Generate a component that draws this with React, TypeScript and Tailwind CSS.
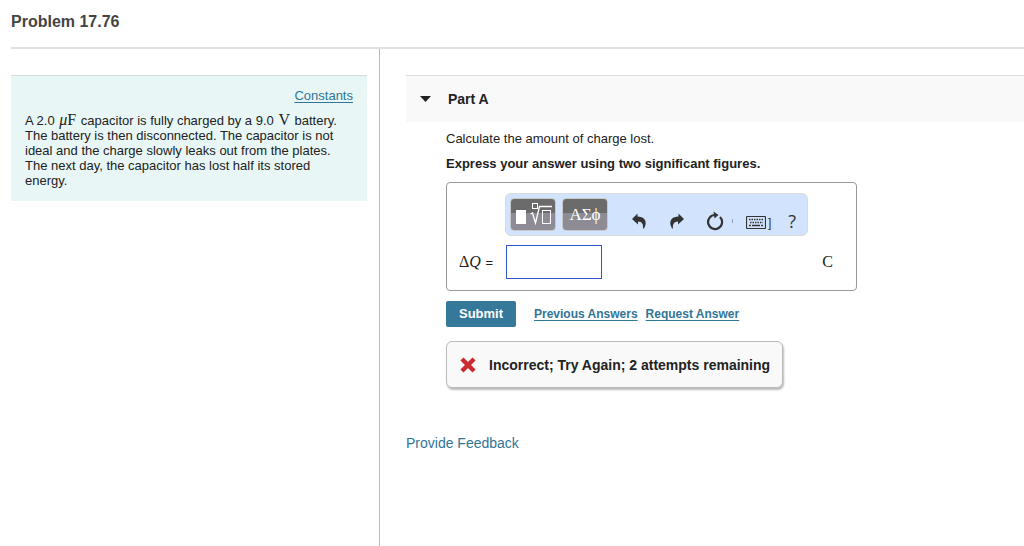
import type { ReactNode } from "react";

const Serif = ({ children }: { children: ReactNode }) => (
  <span className="mx-px font-['Liberation_Serif',serif] text-base leading-none">
    {children}
  </span>
);

const TemplatesIcon = () => (
  <svg
    width="38"
    height="24"
    viewBox="0 0 38 24"
    fill="none"
    stroke="white"
    aria-hidden="true"
  >
    <rect x="2" y="7" width="10" height="14" fill="white" stroke="none" />
    <rect x="18.5" y="0.5" width="5" height="5" />
    <path d="M16.5 11l2-1 3 10L25.5 3.5H38" strokeWidth="1.3" />
    <rect x="28.5" y="7.5" width="8" height="13" />
  </svg>
);

const UndoIcon = () => (
  <svg width="16" height="16" viewBox="0 0 16 16" fill="#333" aria-hidden="true">
    <path d="M1 6L6.500 0.500V3.500C12.500 3.500 15.500 7 14.500 12L13 15.500H12C12.500 11 11 8.700 7 8.500V11.500Z" />
  </svg>
);

const RedoIcon = () => (
  <svg width="16" height="16" viewBox="0 0 16 16" fill="#333" aria-hidden="true">
    <path d="M15 6L9.500 0.500V3.500C3.500 3.500 0.500 7 1.500 12L3 15.500H4C3.500 11 5 8.700 9 8.500V11.500Z" />
  </svg>
);

const ResetIcon = () => (
  <svg width="18" height="20" viewBox="0 0 18 20" aria-hidden="true">
    <path
      d="M14 6A7 7 0 1 1 9 4"
      fill="none"
      stroke="#333"
      strokeWidth="2.2"
    />
    <path d="M7.500 0.500L12.500 4L8.500 7.500Z" fill="#333" />
  </svg>
);

const KeyboardIcon = () => (
  <svg
    width="20"
    height="13"
    viewBox="0 0 20 13"
    fill="none"
    stroke="#333"
    aria-hidden="true"
  >
    <rect x="0.5" y="0.5" width="19" height="12" rx="1" strokeWidth="1.2" />
    <path d="M3 3.500H17" strokeWidth="1.5" strokeDasharray="1.5 1" />
    <path d="M4 6.500H17" strokeWidth="1.5" strokeDasharray="1.5 1" />
    <path d="M3 9.500H5M6 9.500H14M15 9.500H17" strokeWidth="1.5" />
  </svg>
);

const WrongIcon = () => (
  <svg width="16" height="16" viewBox="0 0 16 16" aria-hidden="true">
    <path
      d="M3.500 3.500L12.500 12.500M12.500 3.500L3.500 12.500"
      stroke="#cc2a30"
      strokeWidth="4.4"
      strokeLinecap="square"
      strokeLinejoin="round"
    />
  </svg>
);

const paletteButton =
  "flex h-[33px] w-[46px] items-center justify-center rounded border border-[#c8c8c8] bg-linear-to-b from-[#6b6b6b] from-45% to-[#8d8c94] to-45% text-white";

const Toolbar = () => (
  <div className="flex h-[43px] w-[303px] items-center rounded-md border border-[#dadada] bg-[#d2e4fd] px-1 text-[#333]">
    <button type="button" aria-label="Templates" className={paletteButton}>
      <TemplatesIcon />
    </button>
    <button
      type="button"
      aria-label="Symbols"
      className={`${paletteButton} ml-1.5 font-['Liberation_Serif',serif] text-[17px]`}
    >
      ΑΣϕ
    </button>
    <div className="flex flex-1 items-center pt-3 pl-[23px]">
      <button type="button" aria-label="Undo">
        <UndoIcon />
      </button>
      <button type="button" aria-label="Redo" className="ml-[22px]">
        <RedoIcon />
      </button>
      <button type="button" aria-label="Reset" className="ml-[21px]">
        <ResetIcon />
      </button>
      <span className="ml-2 h-1 w-px bg-[#8fa3bd]" />
      <button
        type="button"
        aria-label="Keyboard shortcuts"
        className="ml-[13px] flex items-center gap-0.5 pt-1 text-xs leading-none"
      >
        <KeyboardIcon />]
      </button>
      <button
        type="button"
        aria-label="Help"
        className="ml-[17px] font-['Open_Sans',sans-serif] text-lg leading-none"
      >
        ?
      </button>
    </div>
  </div>
);

const Answer = () => (
  <form onSubmit={(e) => e.preventDefault()}>
    <div className="w-[411px] rounded border border-[#999] pt-[10px] pb-[11px] pl-[11px]">
      <div className="pl-[47px]">
        <Toolbar />
      </div>
      <div className="mt-[9px] flex items-center">
        <label htmlFor="answer" className="w-12 whitespace-nowrap">
          <Serif>
            Δ<i>Q</i>
          </Serif>{" "}
          =
        </label>
        <input
          id="answer"
          type="text"
          className="h-[34px] w-24 border border-[#2f57c8] bg-white px-2 outline-none"
        />
        <span className="mr-[22px] ml-auto">
          <Serif>C</Serif>
        </span>
      </div>
    </div>
    <div className="mt-2.5 flex items-center text-xs font-bold text-[#317597]">
      <button
        type="submit"
        className="mr-[18px] h-[26px] w-[70px] rounded-xs bg-[#367899] text-[13px] text-white"
      >
        Submit
      </button>
      <a href="#previous" className="mr-2 underline underline-offset-2">
        Previous Answers
      </a>
      <a href="#request" className="underline underline-offset-2">
        Request Answer
      </a>
    </div>
  </form>
);

export default function App() {
  return (
    <div className="flex min-h-screen flex-col bg-white font-['Liberation_Sans',Arial,sans-serif] text-[13px] leading-[15px] text-[#222]">
      <header className="ml-[11px] border-b-2 border-[#e0e0e0] pt-3 pb-[15px]">
        <h1 className="text-base leading-5 font-bold text-[#444]">
          Problem 17.76
        </h1>
      </header>
      <div className="flex flex-1">
        <aside className="w-[380px] shrink-0 border-r border-[#b5bac4] pt-[26px] pr-3 pl-[11px]">
          <div className="border-t border-[#d5dedd] bg-[#e8f7f6] px-3.5 pt-3 pb-[13px]">
            <p className="text-right">
              <a href="#constants" className="text-[#317597] underline underline-offset-2">
                Constants
              </a>
            </p>
            <p className="mt-[9px]">
              A 2.0 <Serif><i>μ</i>F</Serif> capacitor is fully charged by a 9.0{" "}
              <Serif>V</Serif> battery. The battery is then disconnected. The
              capacitor is not ideal and the charge slowly leaks out from the
              plates. The next day, the capacitor has lost half its stored
              energy.
            </p>
          </div>
        </aside>
        <main className="flex-1 pt-[26px] pl-[26px]">
          <section>
            <h2 className="border-t border-[#ddd] bg-[#f9f9f9]">
              <button
                type="button"
                aria-expanded="true"
                className="flex h-[46px] w-full items-center gap-[17px] pl-3.5 text-sm font-bold"
              >
                <svg width="11" height="6" viewBox="0 0 11 6" fill="#222" aria-hidden="true">
                  <path d="M0 0H11L5.500 6Z" />
                </svg>
                Part A
              </button>
            </h2>
            <div className="pt-[9px] pl-10">
              <p>Calculate the amount of charge lost.</p>
              <p className="mt-2.5 mb-[11px] font-bold">
                Express your answer using two significant figures.
              </p>
              <Answer />
              <div
                role="status"
                className="mt-3.5 flex h-[47px] w-[337px] items-center gap-[13px] rounded-md border border-[#bbb] bg-[#f9f9f9] pl-[13px] text-sm font-bold whitespace-nowrap shadow-[1px_2px_2px_#bbb]"
              >
                <WrongIcon />
                Incorrect; Try Again; 2 attempts remaining
              </div>
            </div>
          </section>
          <a href="#feedback" className="mt-[45px] inline-block text-sm text-[#317597]">
            Provide Feedback
          </a>
        </main>
      </div>
    </div>
  );
}
